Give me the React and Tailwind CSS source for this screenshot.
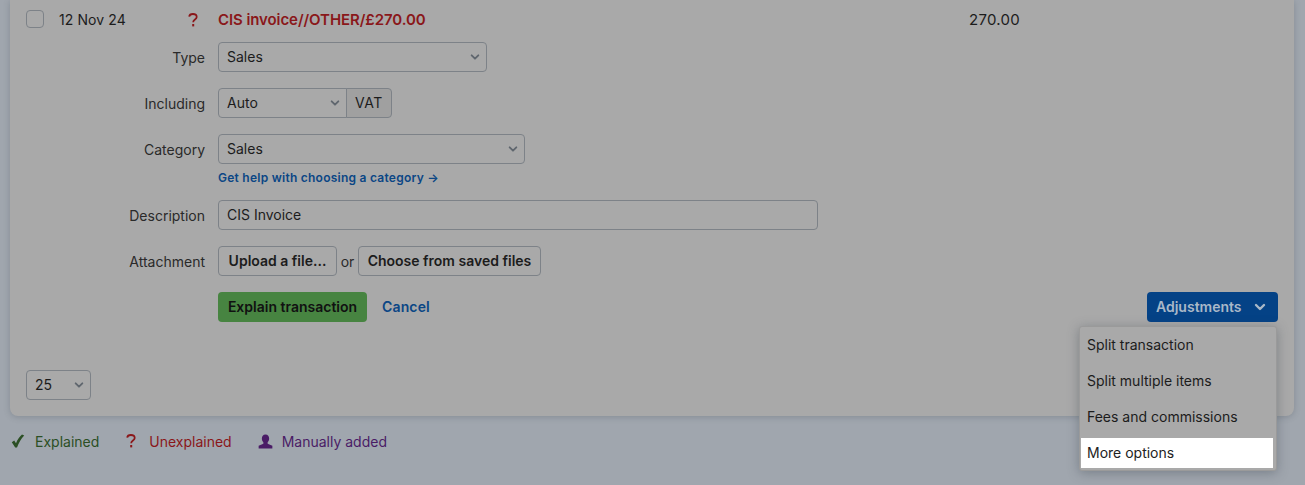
function Chevron({ className = "text-[#5f666e]", size = 10, sw = 2.2 }) {
  return (
    <svg width={size} height={size} viewBox="0 0 12 12" fill="none" className={className}>
      <path d="M2 4l4 4 4-4" stroke="currentColor" strokeWidth={sw} strokeLinecap="round" strokeLinejoin="round" />
    </svg>
  );
}
function Question({ className = "", w = 10, h = 14 }) {
  return (
    <svg width={w} height={h} viewBox="0 0 10 14" fill="none" className={className}>
      <path d="M1.2 3.6C1.4 1.9 2.9 1 4.9 1c2.2 0 3.8 1.1 3.8 2.9 0 1.4-.9 2.1-2 2.9-1 .7-1.5 1.3-1.5 2.5" stroke="currentColor" strokeWidth="1.8" />
      <rect x="4.2" y="11" width="2" height="2.4" fill="currentColor" />
    </svg>
  );
}
function Select({ value, className = "" }) {
  return (
    <div className={`h-[30px] flex items-center justify-between pl-2 pr-[6px] pb-[2px] border border-[#7d8288] rounded-[4px] text-[#1c1c1c] ${className}`}>
      <span>{value}</span>
      <Chevron className="text-[#5f666e] mt-[2px]" />
    </div>
  );
}
function Row({ label, children, className = "" }) {
  return (
    <div className={`flex ${className}`}>
      <div className="w-[195px] h-[30px] flex items-center justify-end text-[#2a2a2a] shrink-0">{label}</div>
      <div className="ml-[13px]">{children}</div>
    </div>
  );
}
const btn = "h-[30px] flex items-center justify-center pb-[2px] border border-[#7d8288] rounded-[4px] font-semibold text-[#1c1c1c]";
export default function App() {
  return (
    <div className="w-[1305px] h-[485px] overflow-hidden bg-[#a0a6ae] px-[10px] text-[14px] font-['Inter',sans-serif]">
      <div className="w-[1284px] h-[416px] bg-[#a9a9a9] rounded-b-lg shadow-[0_1px_6px_rgba(70,80,90,0.3)] flex flex-col">
        <div className="h-[42px] flex items-start pt-[10px] pl-4">
          <div className="w-[18px] h-[18px] border border-[#7d8288] rounded-[4px]" />
          <span className="ml-[15px] w-[129px] leading-[20px] text-[#1c1c1c] tracking-[0.1px]">12 Nov 24</span>
          <Question className="mt-[3px] w-[10px] text-[#8a171a]" />
          <span className="ml-[20px] w-[751px] leading-[20px] text-[15px] tracking-[-0.08px] font-semibold text-[#8a171a]">CIS invoice//OTHER/£270.00</span>
          <span className="leading-[20px] text-[15px] tracking-[0.25px] text-[#1c1c1c]">270.00</span>
        </div>
        <Row label="Type"><Select value="Sales" className="w-[269px]" /></Row>
        <Row label="Including" className="mt-4">
          <div className="flex">
            <Select value="Auto" className="w-[129px] rounded-r-none" />
            <div className="h-[30px] w-[46px] -ml-px pb-[2px] flex items-center justify-center border border-[#7d8288] rounded-r-[4px] bg-[#a0a0a0] text-[#1c1c1c] tracking-[0.6px]">VAT</div>
          </div>
        </Row>
        <Row label="Category" className="mt-4">
          <Select value="Sales" className="w-[307px]" />
          <a className="block mt-[5px] leading-[18px] text-[12px] font-semibold tracking-[0.25px] text-[#0b4685]">Get help with choosing a category →</a>
        </Row>
        <Row label="Description" className="mt-[13px]">
          <div className="h-[30px] w-[600px] flex items-center pl-2 pb-[2px] border border-[#7d8288] rounded-[4px] text-[#1c1c1c]">CIS Invoice</div>
        </Row>
        <Row label="Attachment" className="mt-4">
          <div className="flex items-center">
            <div className={`${btn} w-[119px]`}>Upload a file...</div>
            <span className="w-[21px] text-center text-[#2a2a2a]">or</span>
            <div className={`${btn} w-[183px]`}>Choose from saved files</div>
          </div>
        </Row>
        <div className="relative flex items-center mt-4 ml-[208px] mr-4">
          <div className="h-[30px] w-[149px] flex items-center justify-center pb-[1px] rounded-[4px] bg-[#478441] font-semibold text-[#111]">Explain transaction</div>
          <a className="ml-[15px] pb-[1px] font-semibold tracking-[0.15px] text-[#0b4685]">Cancel</a>
          <div className="ml-auto h-[30px] w-[131px] flex items-center justify-between pl-[9px] pr-3 pb-[1px] rounded-[4px] bg-[#044286] font-semibold text-[#a9b8c8]">
            <span>Adjustments</span>
            <Chevron className="text-[#a9b8c8]" size={12} sw={2.4} />
          </div>
          <div className="absolute z-10 top-[34px] right-[1px] w-[198px] h-[145px] bg-[#a9a9a9] border border-[#9a9a9a] rounded-[3px] shadow-[0_2px_12px_rgba(60,70,80,0.4)] pl-[1px] pr-[3px] text-[#1c1c1c]">
            <div className="h-9 flex items-center pl-[6px] pb-[2px]">Split transaction</div>
            <div className="h-9 flex items-center pl-[6px] pb-[2px]">Split multiple items</div>
            <div className="h-9 flex items-center pl-[6px] pb-[2px]">Fees and commissions</div>
            <div className="h-[30px] mt-[3px] flex items-center pl-[6px] pb-[2px] bg-white text-[#222]">More options</div>
          </div>
        </div>
        <div className="mt-auto mb-4 ml-4 w-[65px]">
          <Select value="25" className="w-[65px]" />
        </div>
      </div>
      <div className="flex items-center h-[20px] mt-[15px]">
        <svg width="14" height="14" viewBox="0 0 14 14" className="ml-[1px] text-[#2b4f24]"><path d="M0.8 8.2 3.2 6.6 5 9.2C6.5 5.6 8.6 2.6 11 .6L13.2 1.6C10.2 4.8 7.6 9.2 6 13.6H4.2z" fill="currentColor" /></svg>
        <span className="ml-[10px] text-[#2b4f24]">Explained</span>
        <Question className="ml-[27px] text-[#8a171a]" />
        <span className="ml-[13px] text-[#8a171a]">Unexplained</span>
        <svg width="15" height="15" viewBox="0 0 14 14" className="ml-[26px] text-[#4a1c66]"><path d="M7 0.5c2.3 0 3.4 1.7 3.4 3.8 0 1.5-.6 2.8-1.4 3.5v1.2l4.4 2V13.5H.6V11l4.4-2V7.8C4.2 7.1 3.6 5.8 3.6 4.3 3.6 2.2 4.7.5 7 .5z" fill="currentColor" /></svg>
        <span className="ml-[9px] text-[#4a1c66]">Manually added</span>
      </div>
    </div>
  );
}
